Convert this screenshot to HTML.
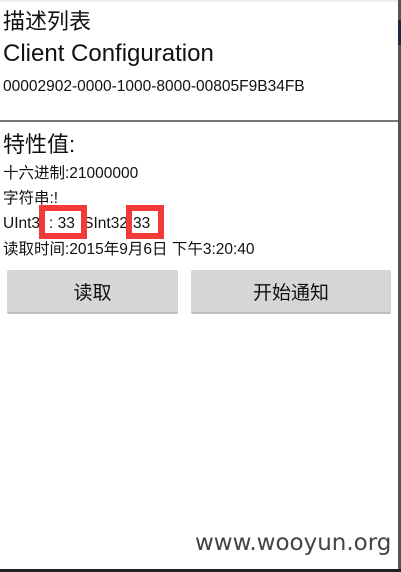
<!DOCTYPE html>
<html><head><meta charset="utf-8"><style>
html,body{margin:0;padding:0}
body{width:401px;height:572px;background:#fff;position:relative;overflow:hidden;font-family:"Liberation Sans","Noto Sans CJK SC",sans-serif;color:#111}
.t{position:absolute;white-space:nowrap;left:3px}
.btn{position:absolute;top:270px;height:44px;background:#d6d6d6;border-bottom:2px solid #bcbcbc;box-sizing:border-box;font-size:19px;display:flex;align-items:center;justify-content:center;border-radius:2px}
.red{position:absolute;border:6px solid #f23a3a;box-sizing:border-box;background:#fff;font-size:15.5px;line-height:22px}
</style></head><body>
<div style="position:absolute;left:0;top:0;width:401px;height:3px;background:linear-gradient(#e8e8e8,#fff)"></div>
<div class="t" style="top:4px;font-size:22px">描述列表</div>
<div class="t" style="top:40px;font-size:24px">Client Configuration</div>
<div class="t" style="top:78px;font-size:15.5px">00002902-0000-1000-8000-00805F9B34FB</div>
<div style="position:absolute;left:0;top:120px;width:398px;height:2px;background:#777"></div>
<div class="t" style="top:127px;font-size:22px">特性值:</div>
<div class="t" style="top:161px;font-size:15.5px">十六进制:21000000</div>
<div class="t" style="top:186px;font-size:15.5px">字符串:!</div>
<div class="t" style="top:215px;font-size:15.5px">UInt32: 33 &nbsp;SInt32: 33</div>
<div class="t" style="top:237px;font-size:15.5px">读取时间:2015年9月6日 下午3:20:40</div>
<div class="red" style="left:39px;top:205px;width:48px;height:34px;padding-left:4px;padding-top:2px">: 33</div>
<div class="red" style="left:126px;top:205px;width:38px;height:34px;padding-left:1px;padding-top:2px">33</div>
<div class="btn" style="left:7px;width:171px">读取</div>
<div class="btn" style="left:191px;width:200px">开始通知</div>
<div style="position:absolute;left:195px;top:530px;font-size:23px;color:#444;font-family:'DejaVu Sans','Liberation Sans',sans-serif">www.wooyun.org</div>
<div style="position:absolute;right:0;top:0;width:3px;height:572px;background:#555"></div>
<div style="position:absolute;right:0;top:20px;width:3px;height:25px;background:#1e2a44"></div>
<div style="position:absolute;left:0;bottom:0;width:401px;height:3px;background:#222"></div>
</body></html>
